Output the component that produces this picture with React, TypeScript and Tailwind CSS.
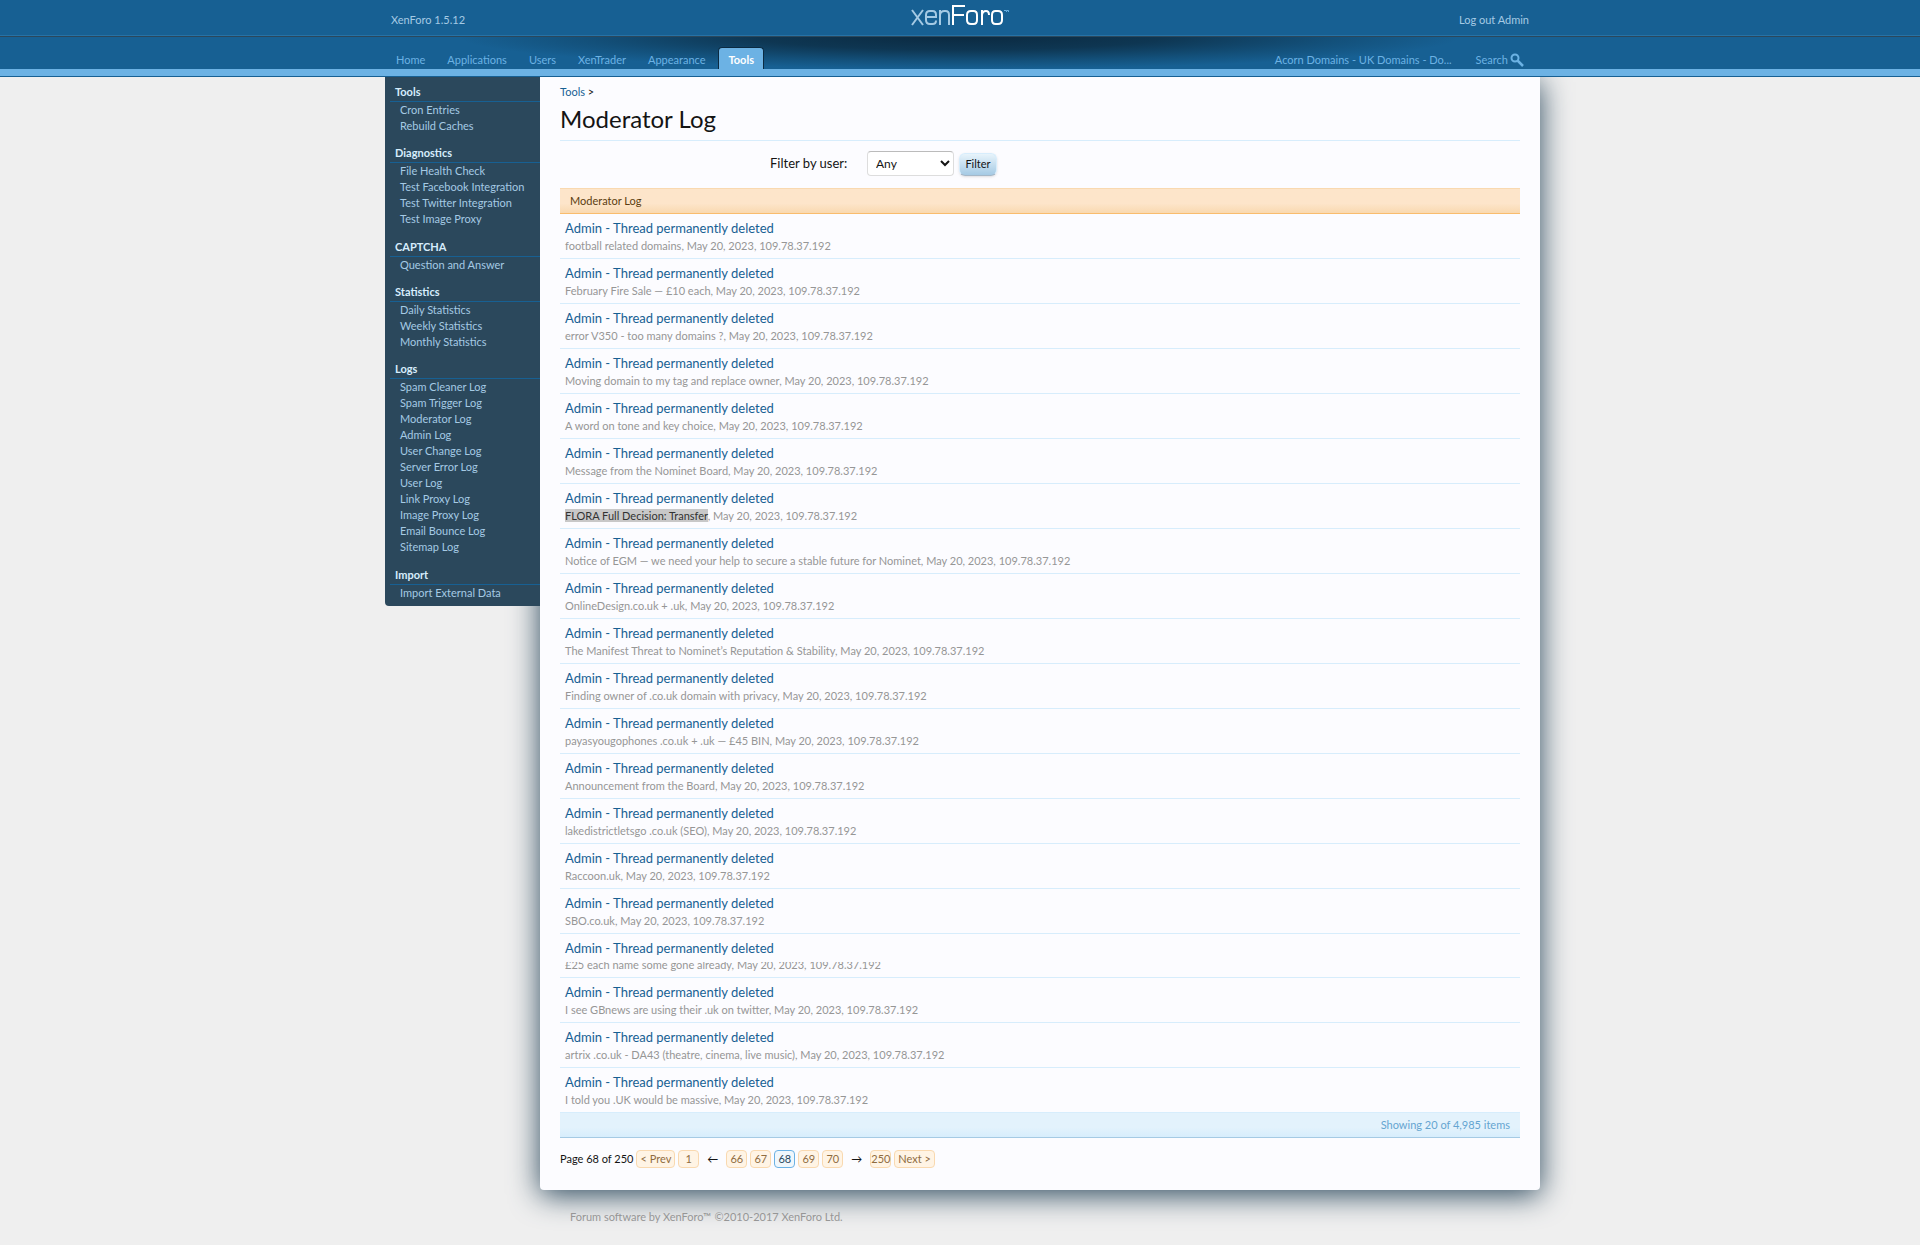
const nav = [
  { label: "Home" },
  { label: "Applications" },
  { label: "Users" },
  { label: "XenTrader" },
  { label: "Appearance" },
  { label: "Tools", active: true },
];

const sections = [
  { title: "Tools", items: ["Cron Entries", "Rebuild Caches"] },
  {
    title: "Diagnostics",
    items: ["File Health Check", "Test Facebook Integration", "Test Twitter Integration", "Test Image Proxy"],
  },
  { title: "CAPTCHA", items: ["Question and Answer"] },
  { title: "Statistics", items: ["Daily Statistics", "Weekly Statistics", "Monthly Statistics"] },
  {
    title: "Logs",
    items: [
      "Spam Cleaner Log",
      "Spam Trigger Log",
      "Moderator Log",
      "Admin Log",
      "User Change Log",
      "Server Error Log",
      "User Log",
      "Link Proxy Log",
      "Image Proxy Log",
      "Email Bounce Log",
      "Sitemap Log",
    ],
  },
  { title: "Import", items: ["Import External Data"] },
];

type Entry = { title: string; marked?: boolean; clipped?: boolean };

const entries: Entry[] = [
  { title: "football related domains" },
  { title: "February Fire Sale — £10 each" },
  { title: "error V350 - too many domains ?" },
  { title: "Moving domain to my tag and replace owner" },
  { title: "A word on tone and key choice" },
  { title: "Message from the Nominet Board" },
  { title: "FLORA Full Decision: Transfer", marked: true },
  { title: "Notice of EGM — we need your help to secure a stable future for Nominet" },
  { title: "OnlineDesign.co.uk + .uk" },
  { title: "The Manifest Threat to Nominet’s Reputation & Stability" },
  { title: "Finding owner of .co.uk domain with privacy" },
  { title: "payasyougophones .co.uk + .uk — £45 BIN" },
  { title: "Announcement from the Board" },
  { title: "lakedistrictletsgo .co.uk (SEO)" },
  { title: "Raccoon.uk" },
  { title: "SBO.co.uk" },
  { title: "£25 each name some gone already", clipped: true },
  { title: "I see GBnews are using their .uk on twitter" },
  { title: "artrix .co.uk - DA43 (theatre, cinema, live music)" },
  { title: "I told you .UK would be massive" },
];

function Logo() {
  return (
    <svg width="98" height="22" viewBox="0 0 98 22" fill="none" strokeWidth="2" aria-label="xenForo" role="img">
      {/* x e n */}
      <g stroke="#a5cae4">
        <path d="M1 6L12 21M12 6L1 21" />
        <path d="M15 13H25V11Q25 7 21.500 7H19Q15 7 15 11V16Q15 20 19 20H21.500Q25 20 25 16.500" />
        <path d="M29 21V6M29 11Q29.500 7 33.500 7H34.500Q38 7 38 11V21" />
      </g>
      {/* F o r o */}
      <g stroke="#ffffff">
        <path d="M42 21V2H54M42 11H53" />
        <path d="M60 7H62.500Q66 7 66 11V16Q66 20 62.500 20H60Q56 20 56 16V11Q56 7 60 7Z" />
        <path d="M71 21V6M71 11Q71.500 7 75 7Q78 7 78 11" />
        <path d="M84.500 7H87Q91 7 91 11V16Q91 20 87 20H84.500Q81 20 81 16V11Q81 7 84.500 7Z" />
      </g>
      <path d="M93 6.500H95M95.500 8V6.500H97.500V8" stroke="#6cb2e4" strokeWidth="1" />
    </svg>
  );
}

function Header() {
  return (
    <header className="relative z-10 bg-[#176093]">
      <div className="h-[37px] border-b border-[#2b485c]">
        <div className="h-9 border-b border-[#2672a6]">
          <div className="mx-auto grid h-full max-w-[1160px] grid-cols-3 px-[11px] text-[#a5cae4]">
            <a href="#version" className="mt-3 leading-4 justify-self-start">XenForo 1.5.12</a>
            <a href="#home" className="mt-1 justify-self-center">
              <Logo />
            </a>
            <a href="#logout" className="mt-3 leading-4 justify-self-end">Log out Admin</a>
          </div>
        </div>
      </div>
      <div className="bg-[radial-gradient(ellipse_500px_32px_at_50%_0,#0b2a41_0%,#0e3652_40%,#13507a_75%,transparent_100%)]">
        <div className="mx-auto flex h-8 max-w-[1160px] items-end pl-[5px] text-[#6cb2e4]">
          <nav className="flex items-end">
            {nav.map((n) =>
              n.active ? (
                <a
                  key={n.label}
                  href="#tools"
                  className="ml-0.5 h-[22px] rounded-t border border-b-0 border-[#0b2a41] bg-[#6cb2e4] px-[9px] pt-[3px] font-bold leading-[18px] text-white"
                >
                  {n.label}
                </a>
              ) : (
                <a key={n.label} href="#nav" className="px-[11px] leading-[18px]">
                  {n.label}
                </a>
              )
            )}
          </nav>
          <div className="ml-auto flex items-end pr-4 leading-[18px]">
            <a href="#board">Acorn Domains - UK Domains - Do...</a>
            <button type="button" className="ml-6 flex items-center">
              Search
              <svg width="14" height="14" viewBox="0 0 14 14" fill="none" stroke="#6cb2e4" className="ml-0.5">
                <circle cx="5" cy="5" r="3.500" strokeWidth="2" />
                <path d="M7.500 7.500L13 13" strokeWidth="2.500" />
              </svg>
            </button>
          </div>
        </div>
      </div>
      <div className="h-2 border-b border-[#176093] bg-[#6cb2e4]" />
    </header>
  );
}

function Sidebar() {
  return (
    <aside className="relative z-10 w-[155px] shrink-0 rounded-bl bg-[#2b485c] pt-[5px]">
      {sections.map((s) => (
        <section key={s.title} className="mb-[9px] last:mb-[5px]">
          <h2 className="ml-[5px] h-5 border-b border-[#176093] pl-[5px] font-bold leading-5 text-[#d7edfc]">{s.title}</h2>
          <ul className={s.items.length > 3 ? "pb-px" : ""}>
            {s.items.map((item) => (
              <li key={item} className="whitespace-nowrap pl-[15px] leading-4 text-[#a5cae4]">
                <a href="#item">{item}</a>
              </li>
            ))}
          </ul>
        </section>
      ))}
    </aside>
  );
}

function LogEntry({ entry }: { entry: Entry }) {
  return (
    <li className="border-b border-[#d7edfc] px-[5px] pb-1 pt-1 last:border-b-0">
      <a href="#entry" className="block text-[13px] leading-5 text-[#176093]">
        Admin - Thread permanently deleted
      </a>
      {entry.clipped ? (
        <div className="mt-1 flex h-[11px] items-end overflow-hidden leading-4 text-[#969696]">{entry.title}, May 20, 2023, 109.78.37.192</div>
      ) : (
        <div className="leading-4 text-[#969696]">
          <span className={entry.marked ? "bg-[#c8c8c8] text-[#323232]" : ""}>{entry.title}</span>, May 20, 2023, 109.78.37.192
        </div>
      )}
    </li>
  );
}

function PageLink({ label, active, wide }: { label: string; active?: boolean; wide?: boolean }) {
  return (
    <a
      href="#page"
      className={`flex h-[18px] items-center justify-center rounded-sm border ${wide ? "px-[3px]" : "w-[21px]"} ${
        active ? "border-[#6cb2e4] bg-[#f0f7fc] text-[#2b485c]" : "border-[#f9d9b0] bg-[#fff4e5] text-[#8f6c3f]"
      }`}
    >
      {label}
    </a>
  );
}

export default function App() {
  return (
    <div className="min-h-screen bg-[#efefef] font-[Lato,sans-serif] text-[11px]">
      <Header />
      <div className="mx-auto flex max-w-[1160px] items-start pl-[5px]">
        <Sidebar />
        <div className="min-w-0 flex-1">
          <main className="rounded-b bg-[#fcfcff] px-5 pb-[22px] pt-1.5 text-[#141414] shadow-[0_5px_30px_#2b485c]">
            <div className="leading-[18px]">
              <a href="#tools" className="text-[#176093]">Tools</a> &gt;
            </div>
            <h1 className="border-b border-[#d7edfc] pb-[5px] pt-px text-2xl leading-[33px]">Moderator Log</h1>
            <form className="flex h-[47px] items-end pb-3 pl-[210px]">
              <label htmlFor="user" className="w-[97px] text-[13px] leading-[25px]">Filter by user:</label>
              <select id="user" className="h-[25px] w-[87px] rounded border border-[#dddddd] border-t-[#bbbbbb] bg-white pl-1 text-xs">
                <option>Any</option>
              </select>
              <button type="button" className="ml-[5px] h-[23px] w-[38px] rounded-md border border-[#d7edfc] border-b-[#a5b8c8] bg-gradient-to-b from-[#e8f4fb] to-[#a5cae4] shadow">
                Filter
              </button>
            </form>
            <h2 className="h-[26px] border-b border-t border-b-[#f9bc6d] border-t-[#f9d9b0] bg-gradient-to-b from-[#fde5ca] from-60% to-[#f9d9b0] px-2.5 leading-6 text-[#5c3d0f]">
              Moderator Log
            </h2>
            <ol>
              {entries.map((e) => (
                <LogEntry key={e.title} entry={e} />
              ))}
            </ol>
            <div className="h-[26px] border-b border-t border-b-[#a5cae4] border-t-[#d7edfc] bg-gradient-to-b from-[#e3f2fc] from-60% to-[#d7edfc] px-2.5 text-right leading-6 text-[#65a5d1]">
              Showing 20 of 4,985 items
            </div>
            <nav className="mt-3 flex items-center gap-[3px]">
              <span>Page 68 of 250</span>
              <PageLink label="< Prev" wide />
              <PageLink label="1" />
              <span className="w-[21px] text-center">←</span>
              <PageLink label="66" />
              <PageLink label="67" />
              <PageLink label="68" active />
              <PageLink label="69" />
              <PageLink label="70" />
              <span className="w-[21px] text-center">→</span>
              <PageLink label="250" />
              <PageLink label="Next >" wide />
            </nav>
          </main>
          <footer className="px-[30px] py-[19px] leading-4 text-[#969696]">Forum software by XenForo™ ©2010-2017 XenForo Ltd.</footer>
        </div>
      </div>
    </div>
  );
}
